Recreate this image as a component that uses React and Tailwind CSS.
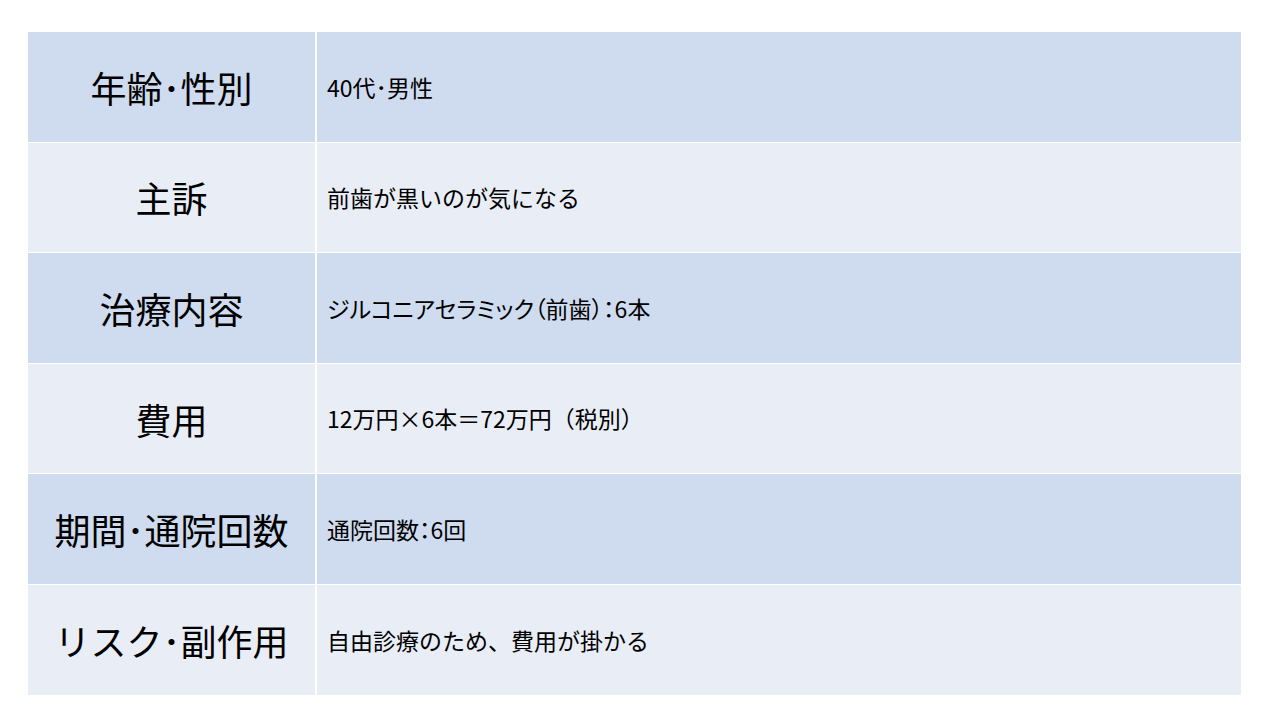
import React from 'react';

const rows = [
  { label: '年齢･性別', value: '40代･男性', dark: true },
  { label: '主訴', value: '前歯が黒いのが気になる', dark: false },
  { label: '治療内容', value: 'ジルコニアセラミック（前歯）：6本', dark: true, narrow: true },
  { label: '費用', value: '12万円×6本＝72万円（税別）', dark: false },
  { label: '期間･通院回数', value: '通院回数：6回', dark: true, narrow: true },
  { label: 'リスク･副作用', value: '自由診療のため、費用が掛かる', dark: false },
];

const font = { fontFamily: '"Noto Sans CJK JP", "Noto Sans", sans-serif' };

export default function App() {
  return (
    <div className="w-[1280px] h-[720px] bg-white pt-[32px] pl-[28px]" style={font}>
      <div className="w-[1213px] flex flex-col gap-px bg-white">
        {rows.map((row) => (
          <div key={row.label} className="flex h-[109.6px] gap-[2px]">
            <div
              className={`w-[287px] shrink-0 flex items-center justify-center text-[36px] text-black ${
                row.dark ? 'bg-[#cfdbee]' : 'bg-[#e9edf6]'
              }`}
            >
              {row.label}
            </div>
            <div
              className={`flex-1 flex items-center pl-[10px] text-[23px] text-black ${
                row.dark ? 'bg-[#cfdbee]' : 'bg-[#e9edf6]'
              } ${row.narrow ? "[font-feature-settings:'palt']" : ''}`}
            >
              {row.value}
            </div>
          </div>
        ))}
      </div>
    </div>
  );
}
